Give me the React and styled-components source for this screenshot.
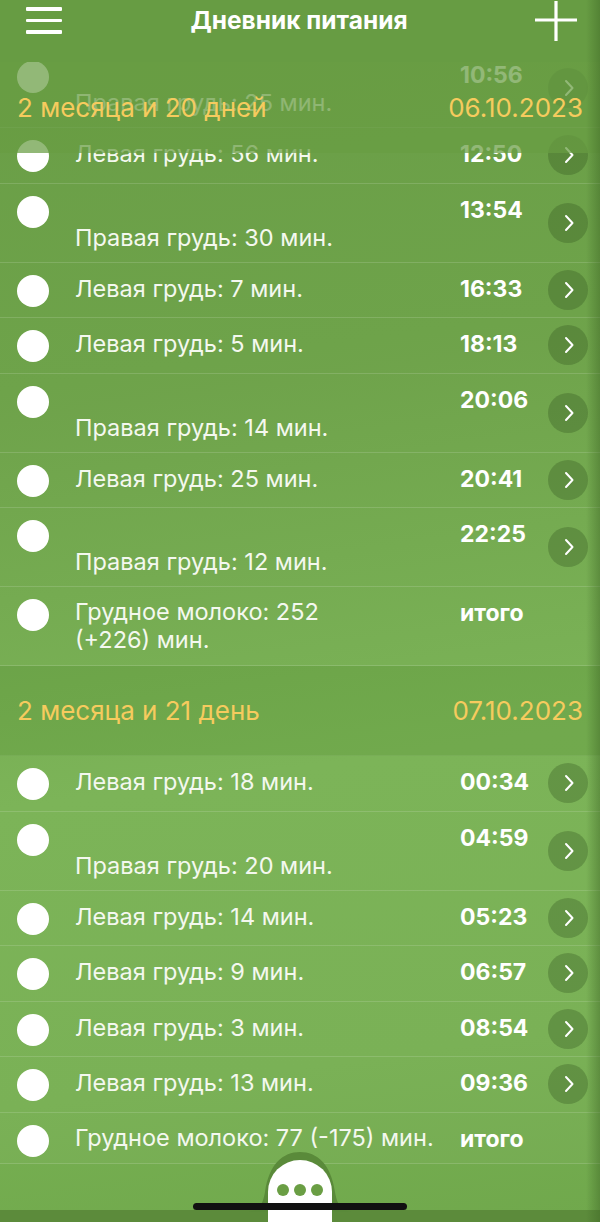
import React from 'react'
import styled, {createGlobalStyle} from 'styled-components'

const GlobalStyle = createGlobalStyle`
  html, body {
    margin: 0;
    padding: 0;
    background: #6fa64a;
  }
  * { box-sizing: border-box; }
`

const dayOne = [
  {time: '12:50', text: 'Левая грудь: 56 мин.'},
  {time: '13:54', text: 'Правая грудь: 30 мин.', split: true},
  {time: '16:33', text: 'Левая грудь: 7 мин.'},
  {time: '18:13', text: 'Левая грудь: 5 мин.'},
  {time: '20:06', text: 'Правая грудь: 14 мин.', split: true},
  {time: '20:41', text: 'Левая грудь: 25 мин.'},
  {time: '22:25', text: 'Правая грудь: 12 мин.', split: true},
  {time: 'итого', text: 'Грудное молоко: 252\n(+226) мин.', total: true},
]

const dayTwo = [
  {time: '00:34', text: 'Левая грудь: 18 мин.'},
  {time: '04:59', text: 'Правая грудь: 20 мин.', split: true},
  {time: '05:23', text: 'Левая грудь: 14 мин.'},
  {time: '06:57', text: 'Левая грудь: 9 мин.'},
  {time: '08:54', text: 'Левая грудь: 3 мин.'},
  {time: '09:36', text: 'Левая грудь: 13 мин.'},
  {time: 'итого', text: 'Грудное молоко: 77 (-175) мин.', total: true},
]

const Chevron = () => (
  <svg width="12" height="18" viewBox="0 0 12 18">
    <path d="M3 2 L9.5 9 L3 16" fill="none" stroke="white" strokeWidth="2" strokeLinecap="round" strokeLinejoin="round"/>
  </svg>
)

const Entry = ({item}) => (
  <Row>
    <DotCell><Dot/></DotCell>
    <Label $split={item.split} $total={item.total}>{item.text}</Label>
    <Time>{item.time}</Time>
    {!item.total && (
      <ArrowCell>
        <ArrowButton><Chevron/></ArrowButton>
      </ArrowCell>
    )}
  </Row>
)

const App = () => {
  return (
    <Screen>
      <GlobalStyle/>
      <NavBar>
        <Burger>
          <span/><span/><span/>
        </Burger>
        <Title>Дневник питания</Title>
        <PlusButton>
          <svg width="44" height="42" viewBox="0 0 44 42">
            <path d="M22 1 V41 M1 20 H43" stroke="white" strokeWidth="3.2"/>
          </svg>
        </PlusButton>
      </NavBar>

      <Viewport>
        <Scroller>
          <Row>
            <DotCell><Dot/></DotCell>
            <Label $split>Правая грудь: 25 мин.</Label>
            <Time>10:56</Time>
            <ArrowCell>
              <ArrowButton><Chevron/></ArrowButton>
            </ArrowCell>
          </Row>
          {dayOne.map((item, i) => <Entry key={i} item={item}/>)}
          <DayHeader>
            <span>2 месяца и 21 день</span>
            <span>07.10.2023</span>
          </DayHeader>
          {dayTwo.map((item, i) => <Entry key={i} item={item}/>)}
        </Scroller>
        <StickyHeader>
          <span>2 месяца и 20 дней</span>
          <span>06.10.2023</span>
        </StickyHeader>
      </Viewport>

      <BottomBand/>
      <MoreHalo>
        <svg width="108" height="60" viewBox="0 0 108 60">
          <path d="M0 60 C13 60 17 52 19 40 C23 12 37 0 54 0 C71 0 85 12 89 40 C91 52 95 60 108 60 Z" fill="#5a8a3a"/>
        </svg>
      </MoreHalo>
      <MoreButton>
        <i/><i/><i/>
      </MoreButton>
      <HomeIndicator/>
    </Screen>
  )
}

export default App

const Screen = styled.div`
  position: relative;
  width: 600px;
  height: 1222px;
  overflow: hidden;
  display: flex;
  flex-direction: column;
  font-family: Inter, "Liberation Sans", Arial, sans-serif;
  color: #fff;
  background: linear-gradient(172deg, #659a41 0%, #6aa045 30%, #78b253 62%, #76af51 85%, #70a84c 100%);

  &::after {
    content: '';
    position: absolute;
    top: 0;
    right: 0;
    bottom: 0;
    width: 14px;
    background: linear-gradient(to right, rgba(60, 100, 35, 0), rgba(60, 100, 35, 0.45));
    pointer-events: none;
    z-index: 5;
  }
`

const NavBar = styled.div`
  position: relative;
  z-index: 3;
  height: 62px;
  flex-shrink: 0;
  display: flex;
  align-items: flex-start;
  justify-content: space-between;
  padding: 0 22px 0 26px;
  background: #679c43;
`

const Burger = styled.div`
  width: 36px;
  padding-top: 7px;
  display: flex;
  flex-direction: column;
  gap: 8px;
  span {
    display: block;
    height: 3.5px;
    background: #fff;
    border-radius: 1px;
  }
`

const Title = styled.div`
  font-size: 24.5px;
  font-weight: 700;
  line-height: 40px;
  padding-left: 2px;
`

const PlusButton = styled.div`
  width: 44px;
  height: 42px;
  display: flex;
`

const Viewport = styled.div`
  position: relative;
  flex: 1;
  overflow: hidden;
`

const Scroller = styled.div`
  margin-top: -13px;
`

const Row = styled.div`
  display: grid;
  grid-template-columns: 32px 411px 88px 40px;
  padding: 0 12px 0 17px;
  border-bottom: 1px solid rgba(255, 255, 255, 0.14);
  background: rgba(255, 255, 255, 0.03);
`

const DotCell = styled.div`
  padding-top: 12px;
`

const Dot = styled.div`
  width: 32px;
  height: 32px;
  border-radius: 50%;
  background: #fff;
`

const Label = styled.div`
  padding: ${p => (p.$split ? '40px 16px 10px 26px' : p.$total ? '11px 16px 11px 26px' : '12px 16px 14.5px 26px')};
  font-size: 23.5px;
  line-height: 28px;
  white-space: pre-line;
  color: #f4f8ef;
`

const Time = styled.div`
  padding-top: 12px;
  font-size: 23px;
  font-weight: 700;
  line-height: 28px;
`

const ArrowCell = styled.div`
  display: flex;
  align-items: center;
`

const ArrowButton = styled.div`
  width: 40px;
  height: 40px;
  border-radius: 50%;
  background: rgba(50, 85, 30, 0.32);
  display: flex;
  align-items: center;
  justify-content: center;
  padding-left: 2px;
`

const DayHeader = styled.div`
  height: 90px;
  display: flex;
  align-items: center;
  justify-content: space-between;
  padding: 0 17px 0 17px;
  font-size: 26px;
  color: #f6cb5e;
  background: rgba(70, 120, 40, 0.14);
  border-bottom: 1px solid rgba(255, 255, 255, 0.06);
`

const StickyHeader = styled(DayHeader)`
  position: absolute;
  top: 0;
  left: 0;
  right: 0;
  height: 91px;
  background: rgba(104, 157, 67, 0.72);
  border-bottom: none;
  z-index: 2;
`

const BottomBand = styled.div`
  position: absolute;
  left: 0;
  right: 0;
  bottom: 0;
  height: 12px;
  background: #5c8b3b;
  z-index: 3;
`

const MoreHalo = styled.div`
  position: absolute;
  left: 246px;
  top: 1152px;
  width: 108px;
  height: 60px;
  display: flex;
  z-index: 4;
`

const MoreButton = styled.div`
  position: absolute;
  left: 268px;
  top: 1160px;
  width: 64px;
  height: 80px;
  border-radius: 32px 32px 0 0;
  background: #fff;
  display: flex;
  justify-content: center;
  gap: 5px;
  padding-top: 24px;
  z-index: 4;
  i {
    display: block;
    width: 12px;
    height: 12px;
    border-radius: 50%;
    background: #6a9e44;
  }
`

const HomeIndicator = styled.div`
  position: absolute;
  left: 193px;
  width: 214px;
  top: 1203px;
  height: 7px;
  border-radius: 4px;
  background: #111;
  z-index: 6;
`
